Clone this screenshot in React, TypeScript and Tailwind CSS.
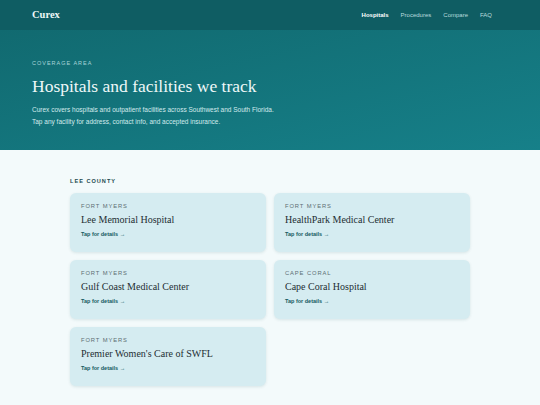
const facilities = [
  { city: "FORT MYERS", name: "Lee Memorial Hospital" },
  { city: "FORT MYERS", name: "HealthPark Medical Center" },
  { city: "FORT MYERS", name: "Gulf Coast Medical Center" },
  { city: "CAPE CORAL", name: "Cape Coral Hospital" },
  { city: "FORT MYERS", name: "Premier Women's Care of SWFL" },
];

const serif = "font-['Liberation_Serif','Times_New_Roman',serif]";

function FacilityCard({ city, name }: { city: string; name: string }) {
  return (
    <div className="h-[59px] rounded-[6px] bg-[#d5ecf1] px-[11px] pt-[9px] shadow-[0_1px_3px_rgba(15,80,90,0.12)]">
      <div className="text-[5.8px] leading-[8px] tracking-[0.9px] text-[#5d6f74]">{city}</div>
      <div className={`${serif} mt-[3px] text-[10px] leading-[14px] text-[#1e2e33]`}>{name}</div>
      <div className="mt-[3px] text-[5.5px] font-bold leading-[8px] text-[#145a60]">Tap for details →</div>
    </div>
  );
}

export default function App() {
  return (
    <div className="min-h-[405px] bg-[#f3fafb] font-['Liberation_Sans',Arial,sans-serif]">
      {/* Nav */}
      <div className="flex h-[30px] items-center justify-between bg-[#0f5d63] pl-[32px] pr-[48px]">
        <div className={`${serif} text-[10.5px] font-bold text-[#eef7f7]`}>Curex</div>
        <div className="flex items-center gap-[12px] text-[6px]">
          <span className="font-bold text-white">Hospitals</span>
          <span className="text-[#b9dcdf]">Procedures</span>
          <span className="text-[#b9dcdf]">Compare</span>
          <span className="text-[#b9dcdf]">FAQ</span>
        </div>
      </div>

      {/* Hero */}
      <div className="h-[120px] bg-gradient-to-br from-[#116a70] to-[#168089] px-[32px] pt-[29px]">
        <div className="text-[5.5px] leading-[8px] tracking-[1px] text-[#a8d4d8]">COVERAGE AREA</div>
        <h1 className={`${serif} mt-[7px] text-[17.5px] leading-[24px] text-[#eef8f8]`}>
          Hospitals and facilities we track
        </h1>
        <p className="mt-[6px] text-[6.5px] leading-[12px] text-[#d3ebed]">
          Curex covers hospitals and outpatient facilities across Southwest and South Florida.
          <br />
          Tap any facility for address, contact info, and accepted insurance.
        </p>
      </div>

      {/* Listing */}
      <div className="mx-auto w-[400px] pt-[27px]">
        <div className="text-[5.6px] font-bold leading-[8px] tracking-[1px] text-[#1d4a50]">LEE COUNTY</div>
        <div className="mt-[8px] grid grid-cols-2 gap-[8px]">
          {facilities.map((f) => (
            <FacilityCard key={f.name} city={f.city} name={f.name} />
          ))}
        </div>
        <div className="mt-[19px] text-[5.6px] font-bold leading-[8px] tracking-[1px] text-[#1d4a50]">COLLIER COUNTY</div>
      </div>
    </div>
  );
}
